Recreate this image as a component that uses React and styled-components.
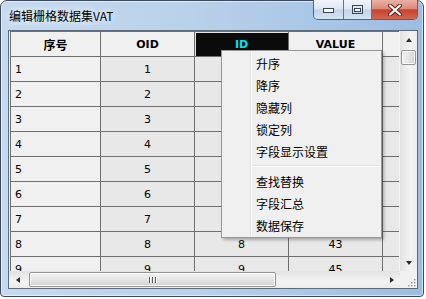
import styled, { createGlobalStyle } from 'styled-components'

const GRID = '#6f6f6f';

const GlobalStyle = createGlobalStyle`
html, body { margin: 0; padding: 0; background: #ffffff; }
#root { width: 426px; height: 299px; }
`;

const Window = styled.div`
position: relative;
box-sizing: border-box;
width: 424px;
height: 297px;
display: flex;
flex-direction: column;
padding: 0 5px 7px 7px;
border: 1px solid #3b4b5d;
border-radius: 7px 7px 4px 4px;
background: linear-gradient(to right, #c6d9ef 0%, #b9d1ea 45%, #a7c5e6 78%, #9cbce1 100%);
box-shadow: inset 0 0 0 1px rgba(255, 255, 255, 0.55);
`;

const TitleBar = styled.div`
height: 29px;
display: flex;
justify-content: space-between;
align-items: flex-start;
`;

const Title = styled.div`
margin-top: 7px;
padding-left: 1px;
font-family: "Noto Sans CJK SC", "DejaVu Sans", sans-serif;
font-size: 12px;
line-height: 16px;
color: #000;
text-shadow: 0 0 6px #eef5fc, 0 0 10px #eef5fc;
`;

const CaptionGroup = styled.div`
display: flex;
margin-top: -1px;
border: 1px solid #4f6481;
border-top: none;
border-radius: 0 0 5px 5px;
overflow: hidden;
`;

const CapBtn = styled.div`
width: ${(p) => p.$w}px;
height: 19px;
display: flex;
align-items: center;
justify-content: center;
background: ${(p) => p.$close
    ? 'linear-gradient(#eab2a6 0%, #dd8a78 45%, #c8442e 52%, #d4644c 100%)'
    : 'linear-gradient(#f0f5fb 0%, #dde7f2 45%, #c3d4e8 52%, #d6e3f1 100%)'};
& + & {
  border-left: 1px solid #5f7594;
}
`;

const Client = styled.div`
flex: 1;
min-height: 0;
display: flex;
flex-direction: column;
border: 1px solid #5c6c7d;
background: #f0f0f0;
overflow: hidden;
`;

const Body = styled.div`
flex: 1;
min-height: 0;
display: flex;
`;

const GridArea = styled.div`
flex: 1;
min-width: 0;
padding-left: 1px;
overflow: hidden;
`;

const Table = styled.div`
border-left: 1px solid ${GRID};
border-top: 1px solid ${GRID};
`;

const Row = styled.div`
display: flex;
height: 25px;
`;

const Cell = styled.div`
box-sizing: border-box;
flex: ${(p) => (p.$w ? `0 0 ${p.$w}px` : '1')};
height: 25px;
display: flex;
align-items: center;
justify-content: ${(p) => (p.$left ? 'flex-start' : 'center')};
padding-left: ${(p) => (p.$left ? '4px' : '0')};
border-right: ${(p) => (p.$w ? `1px solid ${GRID}` : 'none')};
border-bottom: 1px solid ${GRID};
background: ${(p) => (p.$dark ? '#e8e8e8' : '#f0f0f0')};
font-family: "DejaVu Sans", Tahoma, sans-serif;
font-size: 11px;
color: #000;
`;

const HeadCell = styled(Cell)`
font-weight: bold;
font-family: "DejaVu Sans", "Noto Sans CJK SC", sans-serif;
font-size: ${(p) => (p.$cjk ? '12px' : '11px')};
background: ${(p) => (p.$selected ? '#0b0b0b' : '#f0f0f0')};
color: ${(p) => (p.$selected ? '#00e4f0' : '#000')};
box-shadow: ${(p) => (p.$selected ? 'inset 1px 1px 0 #e6e6e6' : 'none')};
`;

const VScroll = styled.div`
width: 17px;
display: flex;
flex-direction: column;
background: linear-gradient(to right, #e2e2e2, #f3f3f3 60%, #ececec);
border-left: 1px solid #f4f4f4;
`;

const HScrollRow = styled.div`
height: 17px;
display: flex;
`;

const HScroll = styled.div`
flex: 1;
display: flex;
align-items: center;
background: linear-gradient(#e2e2e2, #f3f3f3 60%, #ececec);
`;

const ArrowBox = styled.div`
flex: 0 0 17px;
width: 17px;
height: 17px;
display: flex;
align-items: center;
justify-content: center;
`;

const Arrow = styled.div`
width: 0;
height: 0;
border-style: solid;
border-color: transparent;
${(p) => p.$dir === 'up' && 'border-width: 0 3.5px 4px 3.5px; border-bottom-color: #2b2b2b;'}
${(p) => p.$dir === 'down' && 'border-width: 4px 3.5px 0 3.5px; border-top-color: #2b2b2b;'}
${(p) => p.$dir === 'left' && 'border-width: 3.5px 4px 3.5px 0; border-right-color: #2b2b2b;'}
${(p) => p.$dir === 'right' && 'border-width: 3.5px 0 3.5px 4px; border-left-color: #2b2b2b;'}
`;

const Track = styled.div`
flex: 1;
display: flex;
flex-direction: ${(p) => (p.$vertical ? 'column' : 'row')};
align-items: center;
padding: ${(p) => (p.$vertical ? '2px 0 0 0' : '0 0 0 3px')};
`;

const Thumb = styled.div`
box-sizing: border-box;
width: ${(p) => (p.$vertical ? '15px' : `${p.$len}px`)};
height: ${(p) => (p.$vertical ? `${p.$len}px` : '15px')};
border: 1px solid #959595;
border-radius: 2px;
background: ${(p) => (p.$vertical
    ? 'linear-gradient(to right, #f2f2f2, #e6e6e6 50%, #d2d2d2)'
    : 'linear-gradient(#f2f2f2, #e6e6e6 50%, #d2d2d2)')};
box-shadow: inset 0 0 0 1px #fbfbfb;
display: flex;
align-items: center;
justify-content: center;
gap: 2px;
`;

const Grip = styled.div`
width: 1px;
height: 6px;
background: #5a5a5a;
box-shadow: 1px 0 0 #ffffff;
`;

const Corner = styled.div`
width: 17px;
height: 17px;
display: flex;
align-items: flex-end;
justify-content: flex-end;
background: #f0f0f0;
`;

const Menu = styled.div`
position: absolute;
left: 220px;
top: 49px;
box-sizing: border-box;
width: 161px;
padding: 1px;
border: 1px solid #979797;
background: linear-gradient(to right, #f0f0f0 28px, #e2e3e3 28px, #e2e3e3 29px, #ffffff 29px, #ffffff 30px, #f0f0f0 30px);
box-shadow: 2px 2px 3px rgba(0, 0, 0, 0.28);
`;

const MenuItem = styled.div`
height: 22px;
padding-left: 33px;
display: flex;
align-items: center;
font-family: "Noto Sans CJK SC", "DejaVu Sans", sans-serif;
font-size: 12px;
color: #000;
`;

const Separator = styled.div`
height: 8px;
margin-left: 30px;
display: flex;
flex-direction: column;
justify-content: center;
&::before {
  content: '';
  display: block;
  height: 1px;
  background: #e2e3e3;
  border-bottom: 1px solid #ffffff;
}
`;

const COLS = [90, 94, 94, 94];

const rows = [
  [1, 1, 1, 12], [2, 2, 2, 18], [3, 3, 3, 21], [4, 4, 4, 26], [5, 5, 5, 30],
  [6, 6, 6, 34], [7, 7, 7, 38], [8, 8, 8, 43], [9, 9, 9, 45],
];

const menuTop = ['升序', '降序', '隐藏列', '锁定列', '字段显示设置'];
const menuBottom = ['查找替换', '字段汇总', '数据保存'];

const MinIcon = () => (
  <svg width="11" height="6" viewBox="0 0 11 6">
    <rect x="0.5" y="1.5" width="10" height="4" fill="#ffffff" stroke="#39465a" />
  </svg>
);

const MaxIcon = () => (
  <svg width="11" height="9" viewBox="0 0 11 9">
    <rect x="0.5" y="0.5" width="10" height="8" fill="none" stroke="#39465a" />
    <rect x="2.5" y="3.5" width="6" height="3" fill="#ffffff" stroke="#39465a" />
  </svg>
);

const CloseIcon = () => (
  <svg width="14" height="12" viewBox="0 0 14 12">
    <path d="M2 1.5 L12 10.5 M12 1.5 L2 10.5" stroke="#5b1d14" strokeWidth="4" strokeLinecap="round" />
    <path d="M2 1.5 L12 10.5 M12 1.5 L2 10.5" stroke="#ffffff" strokeWidth="2.2" strokeLinecap="round" />
  </svg>
);

const ResizeGrip = () => (
  <svg width="12" height="12" viewBox="0 0 12 12">
    {[[9, 3], [9, 6], [6, 6], [9, 9], [6, 9], [3, 9]].map(([x, y]) => (
      <g key={`${x}-${y}`}>
        <rect x={x + 1} y={y + 1} width="1.5" height="1.5" fill="#ffffff" />
        <rect x={x} y={y} width="1.5" height="1.5" fill="#9a9a9a" />
      </g>
    ))}
  </svg>
);

const App = () => {
  return (
    <>
      <GlobalStyle />
      <Window>
        <TitleBar>
          <Title>编辑栅格数据集VAT</Title>
          <CaptionGroup>
            <CapBtn $w={29}><MinIcon /></CapBtn>
            <CapBtn $w={27}><MaxIcon /></CapBtn>
            <CapBtn $w={45} $close><CloseIcon /></CapBtn>
          </CaptionGroup>
        </TitleBar>
        <Client>
          <Body>
            <GridArea>
              <Table>
                <Row>
                  <HeadCell $w={COLS[0]} $cjk>序号</HeadCell>
                  <HeadCell $w={COLS[1]}>OID</HeadCell>
                  <HeadCell $w={COLS[2]} $selected>ID</HeadCell>
                  <HeadCell $w={COLS[3]}>VALUE</HeadCell>
                  <HeadCell />
                </Row>
                {rows.map((r) => (
                  <Row key={r[0]}>
                    <Cell $w={COLS[0]} $left>{r[0]}</Cell>
                    <Cell $w={COLS[1]} $dark>{r[1]}</Cell>
                    <Cell $w={COLS[2]} $dark>{r[2]}</Cell>
                    <Cell $w={COLS[3]} $dark>{r[3]}</Cell>
                    <Cell $dark />
                  </Row>
                ))}
              </Table>
            </GridArea>
            <VScroll>
              <ArrowBox><Arrow $dir="up" /></ArrowBox>
              <Track $vertical>
                <Thumb $vertical $len={15} />
              </Track>
              <ArrowBox><Arrow $dir="down" /></ArrowBox>
            </VScroll>
          </Body>
          <HScrollRow>
            <HScroll>
              <ArrowBox><Arrow $dir="left" /></ArrowBox>
              <Track>
                <Thumb $len={247}>
                  <Grip /><Grip /><Grip />
                </Thumb>
              </Track>
              <ArrowBox><Arrow $dir="right" /></ArrowBox>
            </HScroll>
            <Corner><ResizeGrip /></Corner>
          </HScrollRow>
        </Client>
        <Menu>
          {menuTop.map((m) => <MenuItem key={m}>{m}</MenuItem>)}
          <Separator />
          {menuBottom.map((m) => <MenuItem key={m}>{m}</MenuItem>)}
        </Menu>
      </Window>
    </>
  )
}

export default App
